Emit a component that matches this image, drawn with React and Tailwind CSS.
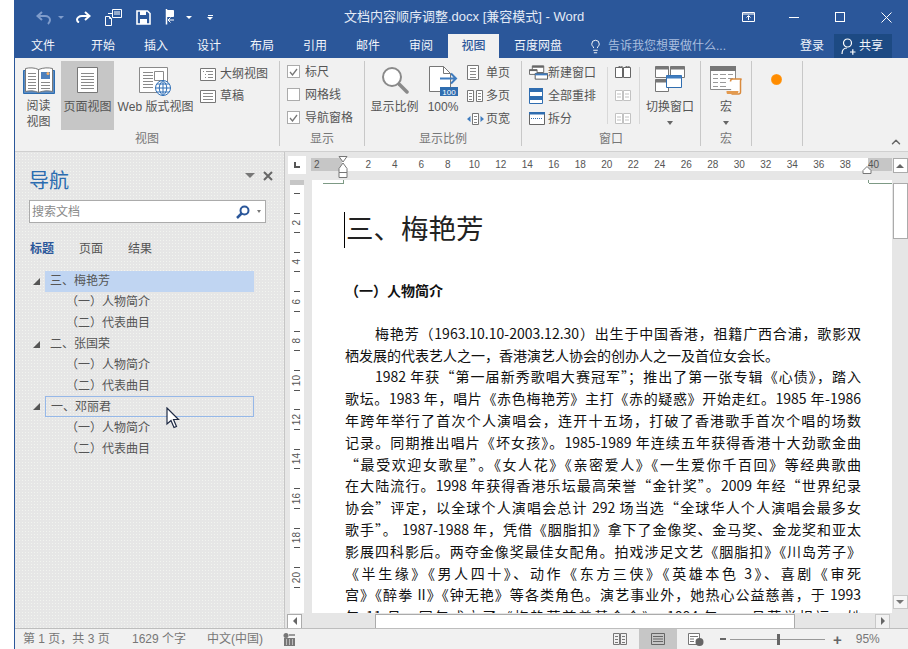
import { ChevronUp, Lightbulb } from 'lucide-react';

const TABS = ['开始', '插入', '设计', '布局', '引用', '邮件', '审阅'];
const RULER_NUMS = [2, 4, 6, 8, 10, 12, 14, 16, 18, 20, 22, 24, 26, 28, 30, 32, 34, 36, 38];
const V_NUMS = [2, 4, 6, 8, 10, 12, 14, 16, 18, 20];

const TREE = [
  { text: '三、梅艳芳', level: 1, selected: true },
  { text: '（一）人物简介', level: 2 },
  { text: '（二）代表曲目', level: 2 },
  { text: '二、张国荣', level: 1 },
  { text: '（一）人物简介', level: 2 },
  { text: '（二）代表曲目', level: 2 },
  { text: '一、邓丽君', level: 1, hover: true },
  { text: '（一）人物简介', level: 2 },
  { text: '（二）代表曲目', level: 2 },
];

// indent: first line of a paragraph, last: not stretched to the right margin
const BODY = [
  { text: '梅艳芳（1963.10.10-2003.12.30）出生于中国香港，祖籍广西合浦，歌影双', indent: true },
  { text: '栖发展的代表艺人之一，香港演艺人协会的创办人之一及首位女会长。', last: true },
  { text: '1982 年获“第一届新秀歌唱大赛冠军”；推出了第一张专辑《心债》，踏入', indent: true },
  { text: '歌坛。1983 年，唱片《赤色梅艳芳》主打《赤的疑惑》开始走红。1985 年-1986' },
  { text: '年跨年举行了首次个人演唱会，连开十五场，打破了香港歌手首次个唱的场数' },
  { text: '记录。同期推出唱片《坏女孩》。1985-1989 年连续五年获得香港十大劲歌金曲' },
  { text: '“最受欢迎女歌星”。《女人花》《亲密爱人》《一生爱你千百回》等经典歌曲' },
  { text: '在大陆流行。1998 年获得香港乐坛最高荣誉“金针奖”。2009 年经“世界纪录' },
  { text: '协会”评定，以全球个人演唱会总计 292 场当选“全球华人个人演唱会最多女' },
  { text: '歌手”。 1987-1988 年，凭借《胭脂扣》拿下了金像奖、金马奖、金龙奖和亚太' },
  { text: '影展四科影后。两夺金像奖最佳女配角。拍戏涉足文艺《胭脂扣》《川岛芳子》' },
  { text: '《半生缘》《男人四十》、动作《东方三侠》《英雄本色 3》、喜剧《审死' },
  { text: '宫》《醉拳 II》《钟无艳》等各类角色。演艺事业外，她热心公益慈善，于 1993' },
  { text: '年 11 月，同年成立了《梅艳芳慈善基金会》，1994 年，一月荣誉捐福，她' },
];

function Lines({ x, y, w, n, step, stroke = '#8a8a8a' }) {
  return Array.from({ length: n }, (_, i) => (
    <path key={i} d={`M${x} ${y + i * step + 0.5}h${w}`} stroke={stroke} />
  ));
}

function BookIcon() {
  return (
    <svg width="32" height="28" viewBox="0 0 32 28" fill="none">
      <path d="M.5 3.5h31v23H.5z" fill="#5b8cc4" stroke="#2b6cb0" />
      <path d="M2.500 1.500c4-1 9-1 13 1v23c-4-2-9-2-13-1zM29.500 1.500c-4-1-9-1-14 1v23c5-2 10-2 14-1z" fill="#fff" stroke="#777" />
      <Lines x={5} y={6} w={8} n={6} step={3} />
      <Lines x={18} y={15} w={9} n={3} step={3} />
      <path d="M18 5h9v7h-9z" fill="#4f81bd" />
      <circle cx="25" cy="6.500" r="1.500" fill="#f6b26b" />
    </svg>
  );
}

function PageIcon() {
  return (
    <svg width="22" height="27" viewBox="0 0 22 27" fill="none">
      <path d="M.5.500h20v25H.5z" fill="#fff" stroke="#777" />
      <Lines x={4} y={6} w={13} n={6} step={3} />
    </svg>
  );
}

function WebIcon() {
  return (
    <svg width="33" height="30" viewBox="0 0 33 30" fill="none">
      <path d="M.5.500h28v25H.5z" fill="#fff" stroke="#8a8a8a" />
      <Lines x={4} y={5} w={10} n={6} step={3} />
      <path d="M15.500 4.500h9v9h-9z" stroke="#8a8a8a" fill="#fff" />
      <circle cx="24" cy="21" r="7.500" fill="#fff" stroke="#2f6fb7" />
      <path d="M16.500 21h15M24 13.500v15M18 17h12M18 25h12M24 13.500c-5 4-5 11 0 15M24 13.500c5 4 5 11 0 15" stroke="#2f6fb7" />
    </svg>
  );
}

function SmallDoc({ outline }) {
  return (
    <svg width="16" height="13" viewBox="0 0 16 13" fill="none">
      <path d="M.5.500h15v12H.5z" fill="#fff" stroke="#777" />
      {outline ? (
        <path d="M3 3.500h1M6 3.500h7M5 6.500h1M8 6.500h5M5 9.500h1M8 9.500h5" stroke="#8a8a8a" />
      ) : (
        <Lines x={3} y={3} w={10} n={3} step={3} />
      )}
    </svg>
  );
}

function Check({ checked, label }) {
  return (
    <div className="flex h-[23px] items-center gap-[5px]">
      <span className="flex h-[13px] w-[13px] items-center justify-center border border-[#ababab] bg-white">
        {checked && (
          <svg width="9" height="8" viewBox="0 0 9 8" fill="none">
            <path d="M1 4l2.500 3L8 1" stroke="#777" strokeWidth="1.300" />
          </svg>
        )}
      </span>
      <span>{label}</span>
    </div>
  );
}

function MagnifierIcon() {
  return (
    <svg width="28" height="28" viewBox="0 0 28 28" fill="none">
      <circle cx="11" cy="11" r="9" fill="#fff" stroke="#8a8a8a" strokeWidth="2" />
      <path d="M18 18l8 8" stroke="#8a8a8a" strokeWidth="3.500" strokeLinecap="round" />
    </svg>
  );
}

function HundredIcon() {
  return (
    <svg width="30" height="31" viewBox="0 0 30 31" fill="none">
      <path d="M1.500.500h14l7 7v18h-21z" fill="#fff" stroke="#777" />
      <path d="M15.500.500v7h7" stroke="#777" />
      <path d="M12 12.500h16M23 7.500l5 5-5 5" stroke="#3f7cbf" strokeWidth="2" />
      <path d="M12 21h18v9H12z" fill="#2f6db0" />
      <text x="21" y="29" textAnchor="middle" fontSize="8" fill="#fff" fontFamily="Liberation Sans">100</text>
    </svg>
  );
}

function SinglePage() {
  return (
    <svg width="13" height="15" viewBox="0 0 13 15" fill="none">
      <path d="M.5.500h11v14H.5z" fill="#fff" stroke="#777" />
      <Lines x={3} y={3} w={6} n={4} step={3} />
    </svg>
  );
}

function MultiPage() {
  return (
    <svg width="16" height="12" viewBox="0 0 16 12" fill="none">
      <path d="M.5.500h6v11h-6zM9.500.500h6v11h-6z" fill="#fff" stroke="#777" />
      <path d="M2 3.500h3M2 6.500h3M2 9.500h3M11 3.500h3M11 6.500h3M11 9.500h3" stroke="#8a8a8a" />
    </svg>
  );
}

function PageWidth() {
  return (
    <svg width="17" height="12" viewBox="0 0 17 12" fill="none">
      <path d="M5.500.500h6v11h-6z" fill="#fff" stroke="#777" />
      <path d="M7 3.500h3M7 6.500h3M7 9.500h3" stroke="#8a8a8a" />
      <path d="M0 6l3.500-3v6zM17 6l-3.500-3v6z" fill="#3f7cbf" />
    </svg>
  );
}

function NewWindow() {
  return (
    <svg width="20" height="15" viewBox="0 0 20 15" fill="none">
      <path d="M3.500.500h12v7h-12z" fill="#fff" stroke="#666" />
      <path d="M3.500.500h12v2h-12z" fill="#666" />
      <path d="M.5 4.500h8v5h-8z" fill="#fff" stroke="#666" />
      <path d="M.5 4.500h8v1.500h-8z" fill="#666" />
      <path d="M6.500 8.500h13v6h-13z" fill="#fff" stroke="#555" />
      <path d="M6.500 8.500h13v2h-13z" fill="#3f7cbf" />
    </svg>
  );
}

function ArrangeAll() {
  return (
    <svg width="14" height="16" viewBox="0 0 14 16" fill="none">
      <path d="M.5.500h13v15H.5z" fill="#fff" stroke="#2f6db0" />
      <path d="M0 0h14v4H0zM0 8h14v4H0z" fill="#2f6db0" />
    </svg>
  );
}

function SplitIcon() {
  return (
    <svg width="16" height="13" viewBox="0 0 16 13" fill="none">
      <path d="M.5.500h15v12H.5z" fill="#fff" stroke="#666" />
      <path d="M0 0h16v2.500H0z" fill="#2f6db0" />
      <path d="M2 6.500h12" stroke="#2f6db0" strokeDasharray="1 1" />
    </svg>
  );
}

function SideBySide({ disabled }) {
  const c = disabled ? '#c2c2c2' : '#666';
  return (
    <svg width="16" height="13" viewBox="0 0 16 13" fill="none">
      <path d="M.5 1.500h7v10h-7zM8.500 1.500h7v10h-7z" fill="#fff" stroke={c} />
      {disabled && <path d="M2 5h4M2 8h4M10 5h4M10 8h4" stroke={c} />}
      {!disabled && <path d="M3 1.500l2-1.500h2v1.500M10 1.500l2-1.500h2v1.500" stroke={c} />}
    </svg>
  );
}

function SwitchWindow() {
  return (
    <svg width="30" height="26" viewBox="0 0 30 26" fill="none">
      <path d="M.5.500h13v11H.5zM15.500.500h14v11h-14zM.5 13.500h13v12H.5z" fill="#fff" stroke="#777" />
      <path d="M.5.500h13v3H.5zM15.500.500h14v3h-14zM.5 13.500h13v3H.5z" fill="#777" />
      <path d="M11.500 9.500h15v12h-15z" fill="#fff" stroke="#2f6db0" />
      <path d="M11.500 9.500h15v3h-15z" fill="#3f7cbf" />
    </svg>
  );
}

function MacroIcon() {
  return (
    <svg width="32" height="29" viewBox="0 0 32 29" fill="none">
      <path d="M.5.500h25v23H.5z" fill="#fff" stroke="#8a8a8a" />
      <path d="M0 0h26v5H0z" fill="#777" />
      <path d="M3 8.500h5M10 8.500h6M18 8.500h5M3 12.500h5M10 12.500h6M18 12.500h5M3 16.500h5M10 16.500h6M3 20.500h5M10 20.500h6" stroke="#9a9a9a" />
      <path d="M20.500 15.500c0-2 1-2.500 2-2.500h9c-1 .5-1 1-1 2v11c0 1-1 2-2 2h-7" fill="#fff" stroke="#d98a3d" strokeWidth="1.500" />
      <path d="M16.500 25h12c0 2-1 3-2 3h-9c-1 0-1-2-1-3z" fill="#e39a4f" />
    </svg>
  );
}

function SmallTool({ icon, label }) {
  return (
    <div className="flex h-[23px] items-center">
      <span className="flex w-[19px] justify-start">{icon}</span>
      <span>{label}</span>
    </div>
  );
}

function Group({ width, label, children }) {
  return (
    <div style={{ width }} className="flex h-[85px] shrink-0 flex-col border-r border-[#c8c8c8]">
      <div className="flex h-[73px] items-start">{children}</div>
      <div className="text-center leading-[14px] text-[#777]">{label}</div>
    </div>
  );
}

function DropCaret({ className }) {
  return <span className={`h-0 w-0 border-x-[3.500px] border-t-[4px] border-x-transparent border-t-[#666] ${className ?? ''}`} />;
}

function TitleBar() {
  return (
    <div className="flex h-[34px] items-center bg-[#2b579a] text-[13px] text-[#e4ebf6]">
      <div className="flex w-[329px] items-center pl-[21px]">
        <svg width="16" height="14" viewBox="0 0 16 14" fill="none" className="mt-[1px]">
          <path d="M6 1L1.500 5 6 9M2 5h7c3 0 5 2 5 4s-1 3-2 4" stroke="#7f9ccb" strokeWidth="2" />
        </svg>
        <span className="ml-[6px] h-0 w-0 border-x-[3px] border-t-[3px] border-x-transparent border-t-[#7f9ccb]" />
        <svg width="16" height="12" viewBox="0 0 16 12" fill="none" className="ml-[11px]">
          <path d="M10 1l4.500 4L10 9M14 5H7C4 5 2 7 2 8.500S3 11 4 11.500" stroke="#fff" strokeWidth="2" />
        </svg>
        <svg width="17" height="17" viewBox="0 0 17 17" fill="none" className="ml-[14px]" stroke="#fff">
          <path d="M7.500.500h9v8h-9zM9 3h6M9 5h6" />
          <path d="M.5 7.500h4l2 2v7h-6zM4.500 7.500v2h2" />
          <path d="M3 4.500h4" />
        </svg>
        <svg width="15" height="15" viewBox="0 0 15 15" fill="none" className="ml-[14px]">
          <path d="M1 1h10.500L14 3.500V14H1z" stroke="#fff" strokeWidth="1.600" />
          <path d="M4 1h6v4H4zM4 9h7v5H4z" fill="#fff" />
        </svg>
        <svg width="13" height="16" viewBox="0 0 13 16" fill="none" className="ml-[14px]" stroke="#fff">
          <path d="M1.500 0v15.500" strokeWidth="1.500" />
          <path d="M1.500 1.500h7v6h-7z" fill="#fff" />
          <path d="M9 11H3M5.500 8.500L3 11l2.500 2.500" />
        </svg>
        <span className="ml-[8px] h-0 w-0 border-x-[3px] border-t-[3.500px] border-x-transparent border-t-white" />
        <span className="ml-[15px] flex flex-col items-center gap-[1px]">
          <span className="h-[1px] w-[5px] bg-white" />
          <span className="h-0 w-0 border-x-[3px] border-t-[3px] border-x-transparent border-t-white" />
        </span>
      </div>
      <div className="w-[370px] whitespace-nowrap">文档内容顺序调整.docx [兼容模式] - Word</div>
      <div className="flex flex-1 items-center">
        <svg width="13" height="10" viewBox="0 0 13 10" fill="none" stroke="#fff" className="ml-[28px]">
          <path d="M.5.500h12v9H.5zM.5 2h12M6.500 8V4M4.500 5.500l2-2 2 2" />
        </svg>
        <span className="ml-[34px] h-[1px] w-[10px] bg-white" />
        <span className="ml-[36px] h-[10px] w-[10px] border border-white" />
        <svg width="11" height="11" viewBox="0 0 11 11" fill="none" stroke="#fff" className="ml-[36px]">
          <path d="M.5.500l10 10M10.500.500l-10 10" />
        </svg>
      </div>
    </div>
  );
}

function TabBar() {
  return (
    <div className="flex h-[24px] items-stretch bg-[#2b579a] pl-[2px] text-xs text-[#f2f5fa]">
      <span className="flex w-[52px] items-center justify-center">文件</span>
      <span className="w-[8px]" />
      {TABS.map((t) => (
        <span key={t} className="mr-[1px] flex w-[52px] items-center justify-center">{t}</span>
      ))}
      <span className="flex w-[51px] items-center justify-center bg-[#f1f1f1] font-medium text-[#2b579a]">视图</span>
      <span className="flex items-center pl-[15px]">百度网盘</span>
      <Lightbulb size={15} strokeWidth={1.500} className="ml-[26px] mt-[5px] text-white" />
      <span className="ml-[5px] flex items-center text-[#a9bedf]">告诉我您想要做什么...</span>
      <span className="ml-[74px] flex items-center">登录</span>
      <span className="ml-[10px] flex w-[58px] items-center gap-[3px] bg-[#1d4a83] pl-[7px]">
        <svg width="15" height="17" viewBox="0 0 15 17" fill="none" stroke="#fff" strokeWidth="1.200">
          <circle cx="6.500" cy="5" r="4" />
          <path d="M1 16c0-4 2-6 5-6M9 14h5.500M11.800 11.200v5.500" />
        </svg>
        共享
      </span>
    </div>
  );
}

function Ribbon() {
  return (
    <div className="flex h-[93px] items-start bg-[#f1f1f1] pt-[3px] text-xs leading-[16px] text-[#555]">
      <Group width={265} label="视图">
        <div className="ml-[2px] flex w-[43px] flex-col items-center pt-[6px]">
          <BookIcon />
          <div className="mt-[3px] text-center">阅读<br />视图</div>
        </div>
        <div className="ml-[1px] flex h-[69px] w-[53px] flex-col items-center bg-[#c6c6c6] pt-[6px]">
          <PageIcon />
          <div className="mt-[5px] whitespace-nowrap">页面视图</div>
        </div>
        <div className="ml-[2px] flex w-[79px] flex-col items-center pt-[6px]">
          <WebIcon />
          <div className="mt-[2px] whitespace-nowrap">Web 版式视图</div>
        </div>
        <div className="ml-[5px] flex flex-col gap-[6px] pt-[5px]">
          <div className="flex h-[16px] items-center gap-[4px]"><SmallDoc outline />大纲视图</div>
          <div className="flex h-[16px] items-center gap-[4px]"><SmallDoc />草稿</div>
        </div>
      </Group>
      <Group width={85} label="显示">
        <div className="ml-[7px] mt-[-1px] flex flex-col">
          <Check checked label="标尺" />
          <Check label="网格线" />
          <Check checked label="导航窗格" />
        </div>
      </Group>
      <Group width={157} label="显示比例">
        <div className="ml-[4px] flex w-[51px] flex-col items-center pt-[5px]">
          <MagnifierIcon />
          <div className="mt-[5px] whitespace-nowrap">显示比例</div>
        </div>
        <div className="ml-[5px] flex w-[36px] flex-col items-center pt-[5px]">
          <HundredIcon />
          <div className="mt-[2px]">100%</div>
        </div>
        <div className="ml-[6px] flex flex-col">
          <SmallTool icon={<SinglePage />} label="单页" />
          <SmallTool icon={<MultiPage />} label="多页" />
          <SmallTool icon={<PageWidth />} label="页宽" />
        </div>
      </Group>
      <Group width={179} label="窗口">
        <div className="ml-[7px] flex flex-col">
          <SmallTool icon={<NewWindow />} label="新建窗口" />
          <SmallTool icon={<ArrangeAll />} label="全部重排" />
          <SmallTool icon={<SplitIcon />} label="拆分" />
        </div>
        <div className="ml-[11px] mt-[6px] h-[57px] border-l border-[#d8d8d8]" />
        <div className="ml-[7px] flex flex-col">
          <div className="flex h-[23px] items-center"><SideBySide /></div>
          <div className="flex h-[23px] items-center"><SideBySide disabled /></div>
          <div className="flex h-[23px] items-center"><SideBySide disabled /></div>
        </div>
        <div className="ml-[8px] mt-[6px] h-[57px] border-l border-[#d8d8d8]" />
        <div className="ml-[5px] flex w-[50px] flex-col items-center pt-[5px]">
          <SwitchWindow />
          <div className="mt-[7px] whitespace-nowrap">切换窗口</div>
          <DropCaret className="mt-[6px]" />
        </div>
      </Group>
      <Group width={51} label="宏">
        <div className="ml-[9px] flex w-[32px] flex-col items-center pt-[5px]">
          <MacroIcon />
          <div className="mt-[4px]">宏</div>
          <DropCaret className="mt-[6px]" />
        </div>
      </Group>
      <Group width={51} label="">
        <span className="ml-[19px] mt-[13px] h-[11px] w-[11px] rounded-full bg-[radial-gradient(circle,#ff8c00_55%,#ffc680_100%)]" />
      </Group>
      <div className="flex flex-1 justify-end self-end pb-[2px] pr-[5px]">
        <ChevronUp size={14} strokeWidth={2.500} className="text-[#666]" />
      </div>
    </div>
  );
}

function NavPane() {
  return (
    <div className="relative flex w-[270px] shrink-0 flex-col border-r border-[#c6c6c6] bg-[#e6e6e6] bg-[radial-gradient(#f2f4f0_0.6px,transparent_0.6px)] bg-[length:3px_3px] pl-[14px] text-xs text-[#555]">
      <div className="flex h-[48px] items-center pr-[11px] pt-[9px]">
        <span className="text-[20px] leading-[28px] text-[#2b6cb0]">导航</span>
        <span className="ml-auto mt-[-10px] h-0 w-0 border-x-[5px] border-t-[5px] border-x-transparent border-t-[#777]" />
        <svg width="10" height="10" viewBox="0 0 10 10" fill="none" stroke="#666" strokeWidth="2" className="ml-[8px] mt-[-10px]">
          <path d="M1 1l8 8M9 1l-8 8" />
        </svg>
      </div>
      <div className="flex h-[23px] w-[237px] items-center border border-[#ababab] bg-white pl-[2px] text-[#8a8a8a]">
        搜索文档
        <svg width="14" height="14" viewBox="0 0 14 14" fill="none" stroke="#2b579a" strokeWidth="2" className="ml-auto">
          <circle cx="8.500" cy="5.500" r="4" />
          <path d="M5.500 8.500L1 13" strokeWidth="2.500" />
        </svg>
        <span className="ml-[7px] mr-[4px] h-0 w-0 border-x-[2.500px] border-t-[3px] border-x-transparent border-t-[#777]" />
      </div>
      <div className="mt-[17px] flex h-[18px] items-center gap-[25px] pl-[1px]">
        <span className="font-bold text-[#2b579a]">标题</span>
        <span>页面</span>
        <span>结果</span>
      </div>
      <div className="mt-[13px] flex flex-col">
        {TREE.map((row, i) => (
          <div key={i} className="flex h-[20.900px] items-center">
            <span className="flex w-[16px] shrink-0 items-center">
              {row.level === 1 && (
                <svg width="7" height="7" viewBox="0 0 7 7" className="ml-[4px]">
                  <path d="M7 0v7H0z" fill="#555" />
                </svg>
              )}
            </span>
            <span
              className={
                'flex h-full w-[209px] items-center ' +
                (row.selected ? 'bg-[#c0d5f2] ' : '') +
                (row.hover ? 'border border-[#96b8e8] ' : '') +
                (row.level === 1 ? 'pl-[5px]' : 'pl-[21px]')
              }
            >
              {row.text}
            </span>
          </div>
        ))}
      </div>
      <svg width="14" height="22" viewBox="0 0 14 22" className="absolute left-[151px] top-[255px]">
        <path d="M1 1v16l4-3.500 3 7 2.500-1-3-7h5z" fill="#fff" stroke="#1f2a44" strokeWidth="1.200" />
      </svg>
    </div>
  );
}

function HRuler() {
  return (
    <div className="relative flex h-[28px] shrink-0 items-start bg-[#e6e6e6]">
      <span className="ml-[3px] mt-[4px] flex h-[18px] w-[18px] items-center justify-center bg-white">
        <span className="h-[6px] w-[6px] border-b-2 border-l-2 border-[#555]" />
      </span>
      <div className="ml-[5px] mt-[6px] flex h-[13px] w-[581px] items-center font-['Liberation_Sans',sans-serif] text-[10px] text-[#555]">
        <span className="flex h-full w-[31px] items-center bg-[#c6c6c6] pl-[3px]">2</span>
        <div className="flex h-full w-[526px] items-center bg-white pl-[13px]">
          {RULER_NUMS.map((n) => (
            <span key={n} className="w-[26.500px] shrink-0 text-center">{n}</span>
          ))}
        </div>
        <span className="flex h-full w-[24px] items-center bg-[#c6c6c6]">40</span>
      </div>
      <svg width="10" height="22" viewBox="0 0 10 22" className="absolute left-[53px] top-[4px]" fill="#fff" stroke="#777">
        <path d="M1 .500h8L5 6zM5 7l4 5.500v4H1v-4z" />
        <path d="M1 16.500h8v5H1z" />
      </svg>
      <svg width="10" height="8" viewBox="0 0 10 8" className="absolute left-[577px] top-[14px]" fill="#fff" stroke="#777">
        <path d="M5 .500l4 4v3H1v-3z" />
      </svg>
    </div>
  );
}

function VRuler() {
  return (
    <div className="ml-[5px] mr-[8px] flex h-full w-[14px] shrink-0 flex-col items-center overflow-hidden">
      <div className="h-[5px] w-full shrink-0 bg-[#c6c6c6]" />
      <div className="flex h-[428px] w-full flex-col items-center bg-white font-['Liberation_Sans',sans-serif] text-[10px] leading-none text-[#555]">
        <span className="mt-[8px] h-[1px] w-[6px] shrink-0 bg-[#555]" />
        <span className="h-[9px] shrink-0" />
        {V_NUMS.map((n) => (
          <div key={n} className="relative flex h-[39.400px] w-full shrink-0 flex-col items-center justify-center">
            <span className="absolute top-[9.500px] h-[1px] w-[6px] bg-[#555]" />
            <span className="rotate-180 [writing-mode:vertical-rl]">{n}</span>
            <span className="absolute top-[29px] h-[1px] w-[6px] bg-[#555]" />
          </div>
        ))}
      </div>
    </div>
  );
}

function Page() {
  return (
    <div className="relative h-full w-[580px] shrink-0 overflow-hidden bg-white pl-[32px] pr-[31px] pt-[32px] font-['Noto_Sans_CJK_SC',sans-serif] text-[#111]">
      <div className="h-[36px] border-l border-black pl-[1px] text-[27.500px] leading-[30px] text-[#222]">三、梅艳芳</div>
      <div className="mt-[32px] pl-[1px] text-[14px] font-bold leading-[21.800px]">（一）人物简介</div>
      <div className="mt-[21px] pl-[1px] text-[14px] leading-[21.800px]">
        {BODY.map((line, i) => (
          <div
            key={i}
            className={
              'h-[21.800px] whitespace-nowrap ' +
              (line.indent ? 'pl-[30px] ' : '') +
              (line.last ? '' : '[text-align:justify] [text-align-last:justify]')
            }
          >
            {line.text}
          </div>
        ))}
      </div>
      <span className="absolute left-[11px] top-[3px] h-[1px] w-[21px] bg-[#7d9a85]" />
      <span className="absolute left-[31px] top-0 h-[3px] w-[1px] bg-[#7d9a85]" />
      <span className="absolute right-0 top-[3px] h-[1px] w-[23px] bg-[#7d9a85]" />
      <span className="absolute right-[23px] top-0 h-[3px] w-[1px] bg-[#7d9a85]" />
    </div>
  );
}

function HScroll() {
  return (
    <div className="flex h-[16px] shrink-0 items-center bg-[#e6e6e6] pl-[2px]">
      <span className="flex h-[15px] w-[15px] items-center justify-center border border-[#ababab] bg-white">
        <span className="h-0 w-0 border-y-[4px] border-r-[4px] border-y-transparent border-r-[#666]" />
      </span>
      <span className="ml-[73px] h-[15px] w-[420px] border border-[#ababab] bg-white" />
      <span className="ml-[80px] flex h-[15px] w-[15px] items-center justify-center border border-[#c8c8c8] bg-[#f1f1f1]">
        <span className="h-0 w-0 border-y-[4px] border-l-[4px] border-y-transparent border-l-[#666]" />
      </span>
    </div>
  );
}

function VScroll() {
  return (
    <div className="flex w-[16px] shrink-0 flex-col items-center bg-[#e6e6e6] pt-[6px]">
      <span className="flex h-[15px] w-[15px] items-center justify-center border border-[#ababab] bg-white">
        <span className="h-0 w-0 border-x-[4px] border-b-[4px] border-x-transparent border-b-[#666]" />
      </span>
      <span className="mt-[10px] h-[56px] w-[15px] border border-[#ababab] bg-white" />
      <span className="mt-[356px] flex h-[14px] w-[15px] items-center justify-center border border-[#c8c8c8] bg-[#f6f6f6]">
        <span className="h-0 w-0 border-x-[4px] border-t-[4px] border-x-transparent border-t-[#777]" />
      </span>
    </div>
  );
}

function StatusBar() {
  return (
    <div className="flex h-[21px] items-center border-t border-[#bdbdbd] bg-[#f1f1f1] pl-[8px] text-xs text-[#777]">
      <span className="w-[109px]">第 1 页，共 3 页</span>
      <span className="w-[75px]">1629 个字</span>
      <span className="w-[76px]">中文(中国)</span>
      <svg width="13" height="13" viewBox="0 0 13 13" fill="none">
        <circle cx="3" cy="2.500" r="2.500" fill="#777" />
        <path d="M6 1h6v2H6z" fill="#999" />
        <path d="M1 5h11v8H1z" fill="#777" />
        <path d="M3 7h1M6 7h1M9 7h1M3 9h1M6 9h1M9 9h1M3 11h1M6 11h1M9 11h1" stroke="#fff" />
      </svg>
      <svg width="14" height="12" viewBox="0 0 14 12" fill="none" stroke="#777" className="ml-[317px]">
        <path d="M.5.500h6v11h-6zM7.500.500h6v11h-6zM2 3.500h3M2 6.500h3M2 9.500h3M9 3.500h3M9 6.500h3M9 9.500h3" />
      </svg>
      <span className="ml-[12px] flex h-[21px] w-[38px] items-center justify-center bg-[#c6c6c6]">
        <svg width="14" height="12" viewBox="0 0 14 12" fill="none" stroke="#666">
          <path d="M.5.500h13v11H.5zM2 3.500h10M2 6h10M2 8.500h10" />
        </svg>
      </span>
      <svg width="16" height="13" viewBox="0 0 16 13" fill="none" className="ml-[11px]">
        <path d="M.5.500h11v11H.5z" stroke="#777" fill="#fff" />
        <path d="M2 3.500h8M2 6h4M2 8.500h4" stroke="#777" />
        <circle cx="11.500" cy="9" r="4" fill="#666" />
      </svg>
      <span className="ml-[16px] h-[2px] w-[6px] bg-[#666]" />
      <span className="relative ml-[4px] flex h-[1px] w-[95px] bg-[#999]">
        <span className="absolute left-[47px] top-[-5px] h-[11px] w-[3px] bg-[#666]" />
      </span>
      <span className="ml-[8px] text-[15px] font-bold leading-none text-[#666]">+</span>
      <span className="ml-[14px]">95%</span>
    </div>
  );
}

export default function App() {
  return (
    <div className="flex h-[649px] w-[908px] overflow-hidden bg-white font-['Liberation_Sans','Noto_Sans_CJK_SC',sans-serif]">
      <div className="w-[14px] shrink-0 bg-white" />
      <div className="flex min-w-0 flex-1 flex-col border-l border-[#2b579a]">
        <TitleBar />
        <TabBar />
        <Ribbon />
        <div className="flex h-[477px] border-t border-[#d0d0d0]">
          <NavPane />
          <div className="flex min-w-0 flex-1 flex-col">
            <HRuler />
            <div className="flex h-[433px] shrink-0 bg-[#e6e6e6]">
              <VRuler />
              <Page />
            </div>
            <HScroll />
          </div>
          <VScroll />
        </div>
        <StatusBar />
      </div>
    </div>
  );
}
